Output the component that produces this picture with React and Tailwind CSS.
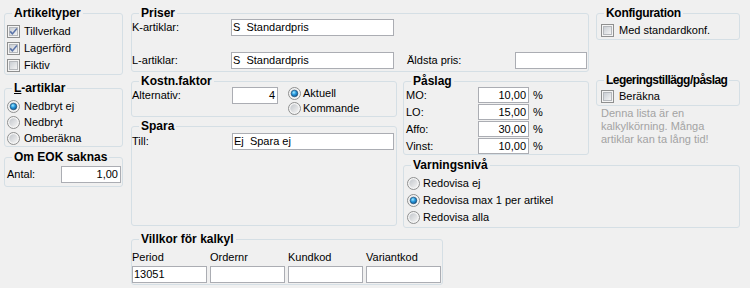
import React, { useId } from "react";

function cleanId(s) {
  return "g" + s.replace(/[^a-zA-Z0-9]/g, "");
}

function CheckBox({ checked }) {
  const id = cleanId(useId());
  return (
    <svg width="13" height="13" viewBox="0 0 13 13" className="shrink-0">
      <defs>
        <linearGradient id={id} x1="0" y1="0" x2="1" y2="1">
          <stop offset="0" stopColor="#c6cbd1" />
          <stop offset="1" stopColor="#f6f6f6" />
        </linearGradient>
      </defs>
      <rect x="0.5" y="0.5" width="12" height="12" fill="#f4f4f4" stroke="#8e8f8f" />
      <rect x="2.5" y="2.5" width="8" height="8" fill={`url(#${id})`} stroke="#b5b8bc" />
      {checked && (
        <path d="M3.2 6.4L5.4 8.9L9.9 3.6" fill="none" stroke="#5a73a8" strokeWidth="1.6" />
      )}
    </svg>
  );
}

function Radio({ checked }) {
  const id = cleanId(useId());
  return (
    <svg width="13" height="13" viewBox="0 0 13 13" className="shrink-0">
      <defs>
        <linearGradient id={id + "a"} x1="0" y1="0" x2="1" y2="1">
          <stop offset="0" stopColor="#c2c6cb" />
          <stop offset="1" stopColor="#f4f4f4" />
        </linearGradient>
        <radialGradient id={id + "b"} cx="0.4" cy="0.35" r="0.7">
          <stop offset="0" stopColor="#a6ecff" />
          <stop offset="0.45" stopColor="#2a9be0" />
          <stop offset="1" stopColor="#0c4f86" />
        </radialGradient>
      </defs>
      <circle cx="6.5" cy="6.5" r="6" fill="#f5f5f5" stroke="#8e8f8f" />
      <circle cx="6.5" cy="6.5" r="4.2" fill={`url(#${id}a)`} />
      {checked && (
        <circle cx="6.5" cy="6.5" r="3.3" fill={`url(#${id}b)`} stroke="#1b4a72" strokeWidth="0.6" />
      )}
    </svg>
  );
}

function Box({ title, className, titleClass = "", children }) {
  return (
    <div className={"relative border border-[#d5dfe5] rounded-[3px] " + className}>
      <span
        className={
          "absolute left-[7px] top-[-8px] bg-[#f0f0f0] px-[2px] text-[12px] font-bold leading-[14px] whitespace-nowrap " +
          titleClass
        }
      >
        {title}
      </span>
      {children}
    </div>
  );
}

function Input({ className, children }) {
  return (
    <div
      className={
        "border border-[#abadb3] bg-white px-[1px] leading-[15px] whitespace-pre overflow-hidden " + className
      }
    >
      {children}
    </div>
  );
}

export default function App() {
  return (
    <div className="w-[750px] h-[288px] bg-[#f0f0f0] overflow-hidden flex text-[11px] leading-[13px] text-black font-['Liberation_Sans',Arial,sans-serif]">
      {/* Left column */}
      <div className="flex flex-col w-[119px] ml-[4px]">
        <Box title="Artikeltyper" className="mt-[13px] h-[62px] pt-[9px] pl-[2px]">
          <div className="flex items-center h-[17px] gap-[4px]">
            <CheckBox checked />
            <span>Tillverkad</span>
          </div>
          <div className="flex items-center h-[17px] gap-[4px]">
            <CheckBox checked />
            <span>Lagerförd</span>
          </div>
          <div className="flex items-center h-[17px] gap-[4px]">
            <CheckBox />
            <span>Fiktiv</span>
          </div>
        </Box>
        <Box
          title={
            <>
              <span className="underline">L</span>-artiklar
            </>
          }
          className="mt-[13px] h-[59px] pt-[9px] pl-[2px]"
        >
          <div className="flex items-center h-[16px] gap-[4px]">
            <Radio checked />
            <span>Nedbryt ej</span>
          </div>
          <div className="flex items-center h-[16px] gap-[4px]">
            <Radio />
            <span>Nedbryt</span>
          </div>
          <div className="flex items-center h-[16px] gap-[4px]">
            <Radio />
            <span>Omberäkna</span>
          </div>
        </Box>
        <Box title="Om EOK saknas" className="mt-[10px] h-[30px] pt-[8px] pl-[2px] pr-[1px]">
          <div className="flex items-center justify-between h-[17px]">
            <span>Antal:</span>
            <Input className="w-[60px] h-[17px] text-right pr-[2px]">1,00</Input>
          </div>
        </Box>
      </div>

      {/* Right area */}
      <div className="flex flex-col ml-[8px]">
        <div className="grid grid-cols-[266px_186px_145px] grid-rows-[72px_84px_72px] gap-x-[6px] items-start">
          {/* Priser */}
          <Box title="Priser" className="col-start-1 col-span-2 row-start-1 mt-[13px] h-[59px] pt-[5px]">
            <div className="flex items-center h-[17px]">
              <span className="w-[99px]">K-artiklar:</span>
              <Input className="w-[163px] h-[17px]">S  Standardpris</Input>
            </div>
            <div className="flex items-center h-[17px] mt-[16px]">
              <span className="w-[99px]">L-artiklar:</span>
              <Input className="w-[163px] h-[17px]">S  Standardpris</Input>
              <span className="ml-[13px] w-[108px]">Äldsta pris:</span>
              <Input className="w-[72px] h-[17px]"></Input>
            </div>
          </Box>

          {/* Konfiguration + Legering */}
          <div className="col-start-3 row-start-1 row-span-2 ml-[1px] flex flex-col">
            <Box title="Konfiguration" className="mt-[13px] h-[27px] pt-[8px] pl-[4px]" titleClass="tracking-[-0.3px]">
              <div className="flex items-center h-[17px] gap-[5px]">
                <CheckBox />
                <span>Med standardkonf.</span>
              </div>
            </Box>
            <Box
              title="Legeringstillägg/påslag"
              className="mt-[40px] h-[26px] pt-[7px] pl-[4px]"
              titleClass="tracking-[-0.55px]"
            >
              <div className="flex items-center h-[17px] gap-[5px]">
                <CheckBox />
                <span>Beräkna</span>
              </div>
            </Box>
            <div className="mt-[1px] pl-[5px] text-[#a3a3a3] leading-[13px]">
              Denna lista är en
              <br />
              kalkylkörning. Många
              <br />
              artiklar kan ta lång tid!
            </div>
          </div>

          {/* Kostn.faktor + Spara */}
          <div className="col-start-1 row-start-2 row-span-2 flex flex-col">
            <Box title="Kostn.faktor" className="mt-[9px] h-[36px] pt-[4px]">
              <div className="flex items-start">
                <span className="w-[100px] h-[17px] mt-[1px] flex items-center">Alternativ:</span>
                <Input className="w-[46px] h-[17px] mt-[1px] text-right pr-[2px]">4</Input>
                <div className="ml-[10px] flex flex-col">
                  <div className="flex items-center h-[15px] gap-[2px]">
                    <Radio checked />
                    <span>Aktuell</span>
                  </div>
                  <div className="flex items-center h-[15px] gap-[2px]">
                    <Radio />
                    <span>Kommande</span>
                  </div>
                </div>
              </div>
            </Box>
            <Box title="Spara" className="mt-[9px] h-[100px] pt-[6px]">
              <div className="flex items-center h-[17px]">
                <span className="w-[100px]">Till:</span>
                <Input className="w-[162px] h-[17px]">Ej  Spara ej</Input>
              </div>
            </Box>
          </div>

          {/* Påslag */}
          <Box title="Påslag" className="col-start-2 row-start-2 mt-[9px] h-[74px] pt-[5px] pl-[2px]">
            <div className="flex flex-col gap-[1px]">
              {[
                ["MO:", "10,00"],
                ["LO:", "15,00"],
                ["Affo:", "30,00"],
                ["Vinst:", "10,00"],
              ].map(([l, v]) => (
                <div key={l} className="flex items-center h-[16px]">
                  <span className="w-[72px]">{l}</span>
                  <Input className="w-[51px] h-[16px] leading-[14px] text-right pr-[2px]">{v}</Input>
                  <span className="ml-[4px]">%</span>
                </div>
              ))}
            </div>
          </Box>

          {/* Varningsnivå */}
          <Box title="Varningsnivå" className="col-start-2 col-span-2 row-start-3 mt-[9px] h-[63px] pt-[9px] pl-[3px]">
            <div className="flex items-center h-[17px] gap-[3px]">
              <Radio />
              <span>Redovisa ej</span>
            </div>
            <div className="flex items-center h-[17px] gap-[3px]">
              <Radio checked />
              <span>Redovisa max 1 per artikel</span>
            </div>
            <div className="flex items-center h-[17px] gap-[3px]">
              <Radio />
              <span>Redovisa alla</span>
            </div>
          </Box>
        </div>

        {/* Villkor för kalkyl */}
        <Box title="Villkor för kalkyl" className="mt-[11px] w-[312px] h-[46px] pt-[10px] pr-[1px]">
          <div className="grid grid-cols-4 gap-x-[3px]">
            <span className="h-[15px] flex items-center">Period</span>
            <span className="h-[15px] flex items-center">Ordernr</span>
            <span className="h-[15px] flex items-center">Kundkod</span>
            <span className="h-[15px] flex items-center">Variantkod</span>
            <Input className="h-[17px] mt-[1px]">13051</Input>
            <Input className="h-[17px] mt-[1px]"></Input>
            <Input className="h-[17px] mt-[1px]"></Input>
            <Input className="h-[17px] mt-[1px]"></Input>
          </div>
        </Box>
      </div>
    </div>
  );
}
